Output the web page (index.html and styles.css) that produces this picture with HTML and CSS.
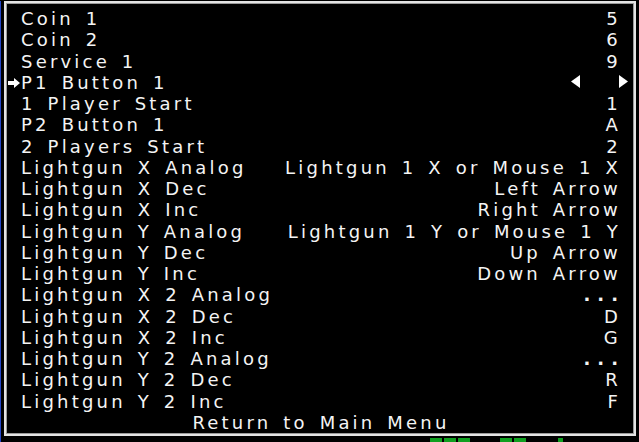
FILE: index.html
```html
<!DOCTYPE html>
<html lang="en">
<head>
    <meta charset="UTF-8">
    <title>Input (this Machine)</title>
    <link rel="stylesheet" href="styles.css">
</head>
<body>

    <div class="screen">
        <!-- Menu frame -->
        <div class="menu">
            <div class="row"><span class="label">Coin 1</span><span class="value">5</span></div>
            <div class="row"><span class="label">Coin 2</span><span class="value">6</span></div>
            <div class="row"><span class="label">Service 1</span><span class="value">9</span></div>
            <div class="row selected">
                <svg class="pointer" width="12" height="10" viewBox="0 0 12 10"><polygon points="0,3 6,3 6,0 12,5 6,10 6,7 0,7" fill="#fff"/></svg>
                <span class="label">P1 Button 1</span>
                <span class="value arrows">
                    <svg width="9" height="13" viewBox="0 0 9 13"><polygon points="9,0 9,13 0,6.5" fill="#fff"/></svg>
                    <svg width="9" height="13" viewBox="0 0 9 13"><polygon points="0,0 0,13 9,6.5" fill="#fff"/></svg>
                </span>
            </div>
            <div class="row"><span class="label">1 Player Start</span><span class="value">1</span></div>
            <div class="row"><span class="label">P2 Button 1</span><span class="value">A</span></div>
            <div class="row"><span class="label">2 Players Start</span><span class="value">2</span></div>
            <div class="row"><span class="label">Lightgun X Analog</span><span class="value">Lightgun 1 X or Mouse 1 X</span></div>
            <div class="row"><span class="label">Lightgun X Dec</span><span class="value">Left Arrow</span></div>
            <div class="row"><span class="label">Lightgun X Inc</span><span class="value">Right Arrow</span></div>
            <div class="row"><span class="label">Lightgun Y Analog</span><span class="value">Lightgun 1 Y or Mouse 1 Y</span></div>
            <div class="row"><span class="label">Lightgun Y Dec</span><span class="value">Up Arrow</span></div>
            <div class="row"><span class="label">Lightgun Y Inc</span><span class="value">Down Arrow</span></div>
            <div class="row"><span class="label">Lightgun X 2 Analog</span><span class="value dots">...</span></div>
            <div class="row"><span class="label">Lightgun X 2 Dec</span><span class="value">D</span></div>
            <div class="row"><span class="label">Lightgun X 2 Inc</span><span class="value">G</span></div>
            <div class="row"><span class="label">Lightgun Y 2 Analog</span><span class="value dots">...</span></div>
            <div class="row"><span class="label">Lightgun Y 2 Dec</span><span class="value">R</span></div>
            <div class="row"><span class="label">Lightgun Y 2 Inc</span><span class="value">F</span></div>
            <div class="row back">Return to Main Menu</div>
        </div>

        <!-- Game screen peeking out under the menu -->
        <div class="ground">
            <span class="block"></span>
            <span class="block"></span>
            <span class="block"></span>
            <span class="block gap"></span>
            <span class="block"></span>
            <span class="block small"></span>
        </div>
    </div>

</body>
</html>
```

FILE: styles.css
```css
/* General */
body {
    margin: 0;
    background-color: #000;
    color: #f4f4f4;
    font-family: 'DejaVu Sans', sans-serif;
    font-size: 18px;
    letter-spacing: 3.2px;
    word-spacing: 3px;
    overflow: hidden;
}

.screen {
    height: 442px;
    border-left: 1px solid #2446c8;
}

/* Menu frame */
.menu {
    margin: 1px 0 0 3px;
    width: 600px;
    height: 426px;
    border: 2px solid #e4e4e4;
    box-shadow: inset 0 0 0 1px #9a9a9a;
    padding: 5px 13px 0 15px;
}

.row {
    position: relative;
    display: flex;
    justify-content: space-between;
    align-items: center;
    height: 21.26px;
    line-height: 21.26px;
    white-space: nowrap;
}

.value {
    text-align: right;
}

.dots {
    font-weight: bold;
    letter-spacing: 7px;
    margin-right: -4px;
}

/* Selected item */
.pointer {
    position: absolute;
    left: -13px;
    top: 6px;
}

.arrows {
    display: flex;
    align-items: center;
    gap: 39px;
    margin-right: -7px;
    margin-top: -1px;
}

.arrows svg {
    display: block;
}

.back {
    justify-content: center;
}

/* Game playfield strip */
.ground {
    display: flex;
    margin: 2px 0 0 429px;
    gap: 2px;
}

.block {
    width: 12px;
    height: 4px;
    background-color: #0fa020;
}

.block.gap {
    margin-left: 28px;
}

.block.small {
    width: 5px;
    margin-left: 30px;
}
```
